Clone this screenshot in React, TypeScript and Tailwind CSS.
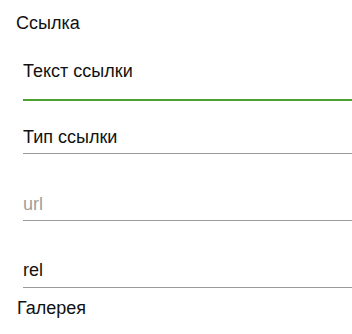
import * as React from 'react'

function Field({
  value,
  placeholder,
  focused,
  className,
}: {
  value?: string
  placeholder?: string
  focused?: boolean
  className?: string
}) {
  return (
    <div
      className={`ml-[23px] ${
        focused ? 'border-b-2 border-[#4ca22f]' : 'border-b border-[#9a9a9a]'
      } ${className ?? ''}`}
    >
      {value ? (
        <div className="leading-[20px] text-[#111]">{value}</div>
      ) : (
        <div className="leading-[20px] text-[#9e9e9e]">{placeholder}</div>
      )}
    </div>
  )
}

export default function App() {
  return (
    <div className="h-[334px] w-[352px] overflow-hidden bg-white font-['Liberation_Sans',Arial,sans-serif] text-[18px] text-[#111]">
      {/* Link section */}
      <div className="pl-[16px] pt-[13px] leading-[20px]">Ссылка</div>

      <Field value="Текст ссылки" focused className="pt-[28px] pb-[18px]" />
      <Field value="Тип ссылки" className="pt-[26px] pb-[6px]" />
      <Field placeholder="url" className="pt-[40px] pb-[6px]" />
      <Field value="rel" className="pt-[39px] pb-[7px]" />

      {/* Gallery section */}
      <div className="pl-[17px] pt-[10px] leading-[20px]">Галерея</div>
    </div>
  )
}
